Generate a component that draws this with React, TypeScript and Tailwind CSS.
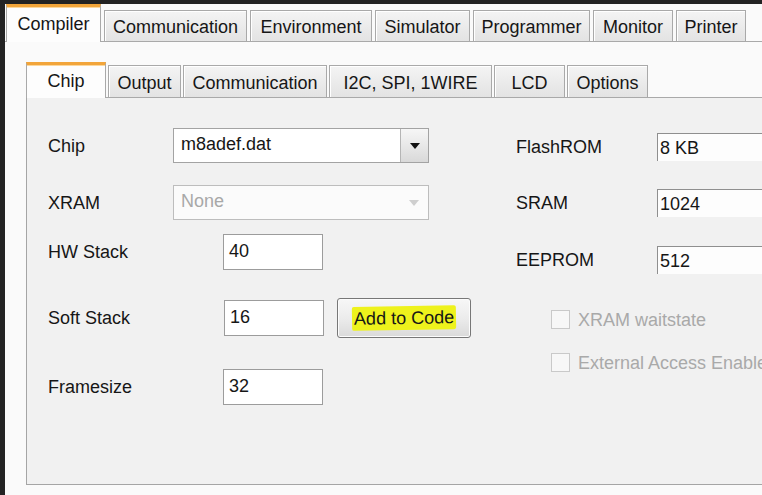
import React from "react";

type TabDef = { label: string; w: string; selected?: boolean };

const outerTabs: TabDef[] = [
  { label: "Compiler", w: "w-[95px]", selected: true },
  { label: "Communication", w: "w-[143px]" },
  { label: "Environment", w: "w-[122px]" },
  { label: "Simulator", w: "w-[95px]" },
  { label: "Programmer", w: "w-[117px]" },
  { label: "Monitor", w: "w-[80px]" },
  { label: "Printer", w: "w-[70px]" },
];

const innerTabs: TabDef[] = [
  { label: "Chip", w: "w-[80px]", selected: true },
  { label: "Output", w: "w-[73px]" },
  { label: "Communication", w: "w-[144px]" },
  { label: "I2C, SPI, 1WIRE", w: "w-[163px]" },
  { label: "LCD", w: "w-[71px]" },
  { label: "Options", w: "w-[81px]" },
];

function Tab({ t, selH, h }: { t: TabDef; selH: string; h: string }) {
  if (t.selected) {
    return (
      <div
        className={`${t.w} ${selH} relative z-10 -mb-px flex items-center justify-center border-x border-t-[3px] border-x-[#a9a9a9] border-t-[#f2a53a] bg-[#fdfdfd] shadow-[inset_0_1px_0_#fcd79c] pb-[2px]`}
      >
        {t.label}
      </div>
    );
  }
  return (
    <div
      className={`${t.w} ${h} flex items-center justify-center border-x border-t border-[#a9a9a9] bg-gradient-to-b from-[#f4f4f4] to-[#e3e3e3] shadow-[inset_1px_1px_0_#ffffff] pt-[2px] whitespace-nowrap`}
    >
      {t.label}
    </div>
  );
}

function Arrow({ color }: { color: string }) {
  return (
    <svg width="10" height="6" viewBox="0 0 10 6">
      <path d="M0 0 L10 0 L5 6 Z" fill={color} />
    </svg>
  );
}

function TextBox({ value }: { value: string }) {
  return (
    <div className="w-[100px] h-[36px] border border-[#9c9c9c] bg-white pl-[5px] flex items-center pb-[3px]">
      {value}
    </div>
  );
}

function ReadBox({ value }: { value: string }) {
  return (
    <div className="flex-1 h-[28px] border-t border-l border-[#8f8f8f] bg-[#fdfdfd] pl-[2px] flex items-center whitespace-nowrap">
      {value}
    </div>
  );
}

function CheckRow({ label }: { label: string }) {
  return (
    <div className="flex items-center h-[19px] ml-[35px] whitespace-nowrap text-[#a9a9a9]">
      <div className="w-[19px] h-[19px] border border-[#c9c9c9] bg-[#f7f7f7] shrink-0" />
      <span className="ml-[8px]">{label}</span>
    </div>
  );
}

export default function App() {
  return (
    <div className="w-[762px] h-[495px] overflow-hidden bg-[#232323] pt-[4px] pl-[5px] font-['Liberation_Sans','Arial',sans-serif] text-[18px] leading-none text-[#161616]">
      <div className="h-full bg-[#fafafa] flex flex-col">
        {/* outer tab row */}
        <div className="flex items-end gap-[3px] pl-[1px] h-[38px] border-b border-[#a9a9a9] shrink-0">
          {outerTabs.map((t) => (
            <Tab key={t.label} t={t} selH="h-[38px]" h="h-[31px]" />
          ))}
        </div>

        <div className="pl-[21px] pt-[20px] flex flex-col">
          {/* inner tab row */}
          <div className="flex items-end gap-[2px] h-[36px] border-b border-[#a9a9a9] shrink-0">
            {innerTabs.map((t) => (
              <Tab key={t.label} t={t} selH="h-[36px]" h="h-[32px]" />
            ))}
          </div>

          {/* inner panel */}
          <div className="h-[387px] bg-[#f1f1f1] border-l border-b border-[#a5a5a5] pl-[21px] flex">
            {/* left column */}
            <div className="w-[468px] shrink-0 pt-[30px] flex flex-col">
              <div className="h-[35px] flex items-center">
                <div className="w-[125px]">Chip</div>
                <div className="w-[256px] h-[35px] border border-[#a3a3a3] bg-white flex">
                  <div className="flex-1 flex items-center pl-[7px] pb-[3px]">m8adef.dat</div>
                  <div className="w-[28px] border-l border-[#b5b5b5] bg-gradient-to-b from-[#f6f6f6] via-[#e8e8e8] to-[#d9d9d9] flex items-center justify-center">
                    <Arrow color="#111" />
                  </div>
                </div>
              </div>

              <div className="h-[35px] mt-[22px] flex items-center">
                <div className="w-[125px]">XRAM</div>
                <div className="w-[256px] h-[35px] border border-[#bdbdbd] bg-[#fbfbfb] flex">
                  <div className="flex-1 flex items-center pl-[7px] pb-[3px] text-[#a8a8a8]">None</div>
                  <div className="w-[28px] flex items-center justify-center">
                    <Arrow color="#cfcfcf" />
                  </div>
                </div>
              </div>

              <div className="h-[36px] mt-[14px] flex items-center">
                <div className="w-[175px]">HW Stack</div>
                <TextBox value="40" />
              </div>

              <div className="h-[40px] mt-[28px] flex items-center">
                <div className="w-[176px]">Soft Stack</div>
                <TextBox value="16" />
                <button className="ml-[13px] w-[134px] h-[40px] border border-[#777777] rounded-[3px] bg-gradient-to-b from-[#f7f7f7] via-[#ececec] to-[#dadada] shadow-[inset_0_0_0_1px_#fcfcfc] flex items-center justify-center">
                  <span className="bg-[#eef21c] px-[2px] py-[3px] rounded-[2px] -rotate-[1deg]">Add to Code</span>
                </button>
              </div>

              <div className="h-[36px] mt-[31px] flex items-center">
                <div className="w-[175px]">Framesize</div>
                <TextBox value="32" />
              </div>
            </div>

            {/* right column */}
            <div className="flex-1 pt-[35px] flex flex-col">
              <div className="h-[28px] flex items-center">
                <div className="w-[141px] shrink-0">FlashROM</div>
                <ReadBox value="8 KB" />
              </div>
              <div className="h-[28px] mt-[28px] flex items-center">
                <div className="w-[141px] shrink-0">SRAM</div>
                <ReadBox value="1024" />
              </div>
              <div className="h-[28px] mt-[29px] flex items-center">
                <div className="w-[141px] shrink-0">EEPROM</div>
                <ReadBox value="512" />
              </div>
              <div className="mt-[36px]">
                <CheckRow label="XRAM waitstate" />
              </div>
              <div className="mt-[24px]">
                <CheckRow label="External Access Enable" />
              </div>
            </div>
          </div>
        </div>
      </div>
    </div>
  );
}
